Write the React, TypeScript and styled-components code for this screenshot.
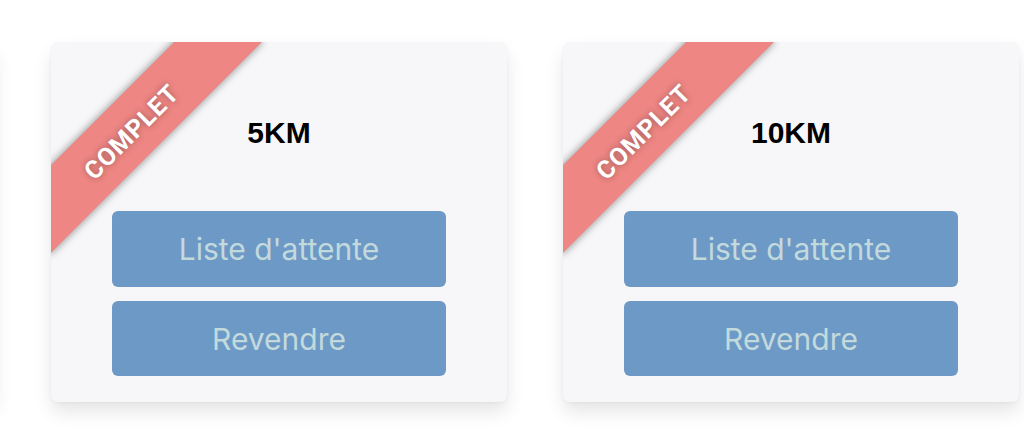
import React from 'react';
import styled, { createGlobalStyle } from 'styled-components';

// previous card of the carousel only peeks in at the left edge
const races = [
  { id: 'prev', label: '', full: false, peek: true },
  { id: '5km', label: '5KM', full: true, peek: false },
  { id: '10km', label: '10KM', full: true, peek: false },
];

const GlobalStyle = createGlobalStyle`
  html, body {
    margin: 0;
    padding: 0;
    background: #ffffff;
    overflow: hidden;
  }
  body {
    font-family: 'Inter', 'Liberation Sans', Arial, sans-serif;
  }
`;

const Viewport = styled.div`
  width: 1024px;
  height: 440px;
  overflow: hidden;
`;

const Track = styled.div`
  display: flex;
  gap: 56px;
  padding-top: 42px;
  margin-left: -461px;
`;

const Card = styled.div`
  position: relative;
  flex: 0 0 456px;
  height: 360px;
  box-sizing: border-box;
  padding: 74px 61px 26px;
  display: flex;
  flex-direction: column;
  align-items: stretch;
  background: #f7f7f9;
  border-radius: 7px;
  box-shadow: 0 10px 18px rgba(0, 0, 0, 0.1), 0 1px 3px rgba(0, 0, 0, 0.04);
  overflow: hidden;
`;

const Ribbon = styled.div`
  position: absolute;
  left: -67px;
  top: 53px;
  width: 300px;
  height: 62px;
  transform: rotate(-45deg);
  background: #ee8683;
  box-shadow: 0 0 9px rgba(0, 0, 0, 0.45);
  display: flex;
  align-items: center;
  justify-content: center;
  padding: 4px 12px 0 0;
  box-sizing: border-box;
  color: #ffffff;
  font-family: 'Roboto', 'DejaVu Sans', sans-serif;
  font-weight: 700;
  font-size: 25px;
  letter-spacing: 1px;
  text-shadow: 0 0 6px rgba(0, 0, 0, 0.35);
`;

const Title = styled.h3`
  margin: 0 0 61px;
  text-align: center;
  font-family: 'Liberation Sans', Arial, sans-serif;
  font-weight: 700;
  font-size: 30px;
  line-height: 34px;
  color: #000000;
`;

const Actions = styled.div`
  display: flex;
  flex-direction: column;
  gap: 14px;
`;

const ActionButton = styled.button<{ $tall?: boolean }>`
  height: ${p => (p.$tall ? '76px' : '75px')};
  border: none;
  border-radius: 6px;
  background: #6d99c6;
  color: #c3dadd;
  font-family: 'Inter', 'Liberation Sans', Arial, sans-serif;
  font-size: 30px;
  font-weight: 400;
  cursor: pointer;
`;

const App = () => (
  <Viewport>
    <GlobalStyle />
    <Track>
      {races.map(r => (
        <Card key={r.id} aria-hidden={r.peek}>
          {!r.peek && (
            <>
              {r.full && <Ribbon>COMPLET</Ribbon>}
              <Title>{r.label}</Title>
              <Actions>
                <ActionButton $tall disabled>Liste d'attente</ActionButton>
                <ActionButton disabled>Revendre</ActionButton>
              </Actions>
            </>
          )}
        </Card>
      ))}
    </Track>
  </Viewport>
);

export default App;
